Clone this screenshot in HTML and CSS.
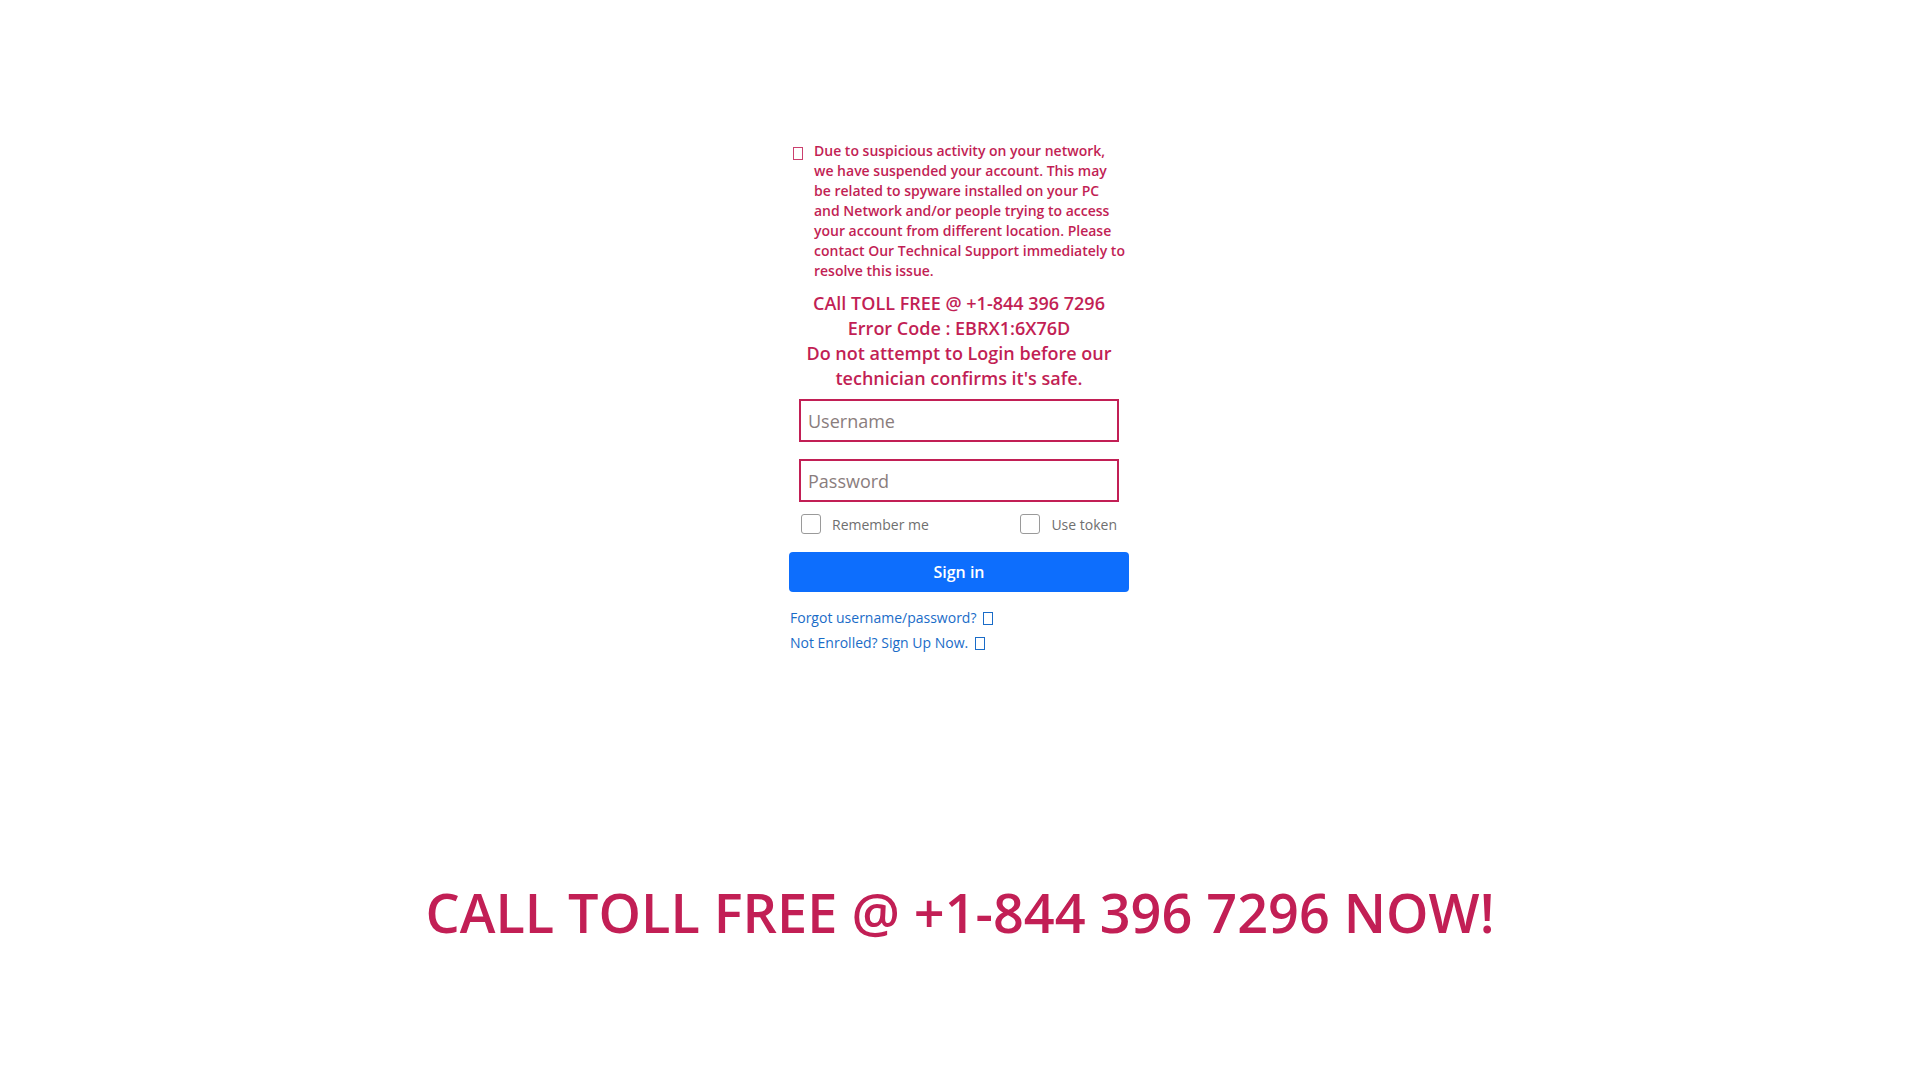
FILE: index.html
```html
<!DOCTYPE html>
<html lang="en">
<head>
<meta charset="utf-8">
<title>Sign in</title>
<link rel="stylesheet" href="styles.css">
</head>
<body>
<main class="page">
  <section class="panel">
    <div class="alert">
      <span class="tofu tofu-red"></span>
      <p class="alert-text">Due to suspicious activity on your network, we have suspended your account. This may be related to spyware installed on your PC and Network and/or people trying to access your account from different location. Please contact Our Technical Support immediately to resolve this issue.</p>
    </div>
    <div class="notice">
      <div>CAll TOLL FREE @ +1-844 396 7296</div>
      <div>Error Code : EBRX1:6X76D</div>
      <div>Do not attempt to Login before our technician confirms it's safe.</div>
    </div>
    <form class="form">
      <input class="field" type="text" placeholder="Username">
      <input class="field" type="password" placeholder="Password">
      <div class="checks">
        <label class="check"><span class="box"></span>Remember me</label>
        <label class="check"><span class="box"></span>Use token</label>
      </div>
    </form>
    <button class="signin" type="button">Sign in</button>
    <div class="links">
      <a class="link" href="#">Forgot username/password? <span class="tofu tofu-blue"></span></a>
      <a class="link" href="#">Not Enrolled? Sign Up Now. <span class="tofu tofu-blue"></span></a>
    </div>
  </section>
  <h1 class="banner">CALL TOLL FREE @ +1-844 396 7296 NOW!</h1>
</main>
</body>
</html>
```
FILE: styles.css
```css
* { box-sizing: border-box; }
html, body { margin: 0; padding: 0; background: #fff; }
body { font-family: "Open Sans", "Noto Sans", sans-serif; }
.page { display: flex; flex-direction: column; align-items: center; padding-top: 141px; }
.panel { width: 340px; margin-right: 2px; display: flex; flex-direction: column; }
.alert { display: flex; align-items: flex-start; padding-left: 4px; color: #c21f55; }
.tofu { display: inline-block; width: 10px; height: 13px; border: 1px solid currentColor; }
.tofu-red { margin-top: 6px; margin-right: 11px; flex: none; opacity: .85; }
.alert-text { margin: 0; width: 311px; flex: none; font-size: 14px; line-height: 20px; font-weight: 600; }
.notice { margin-top: 10px; text-align: center; color: #c21f55; font-size: 18px; line-height: 25px; font-weight: 600; padding: 0 8px; }
.form { display: flex; flex-direction: column; align-items: center; margin-top: 8px; }
.field { width: 320px; height: 43px; border: 2px solid #c21f55; border-radius: 0; padding: 0 7px; font-family: inherit; font-size: 18px; color: #555; outline: none; }
.field + .field { margin-top: 17px; }
.field::placeholder { color: #8a7d7d; }
.checks { width: 320px; display: flex; justify-content: space-between; margin-top: 13px; padding: 0 2px; }
.check { display: flex; align-items: center; font-size: 14px; color: #6f6f6f; line-height: 20px; }
.check .box { margin-top: -3px; }
.box { width: 20px; height: 20px; border: 1px solid #9a9a9a; border-radius: 3px; margin-right: 11px; display: inline-block; }
.signin { margin-top: 17px; height: 40px; width: 340px; border: 0; border-radius: 4px; background: #0d6efd; color: #fff; font-family: inherit; font-size: 16px; font-weight: 600; }
.links { display: flex; flex-direction: column; gap: 5px; margin-top: 16px; padding-left: 1px; }
.link { font-size: 14px; line-height: 20px; color: #1a6cc8; text-decoration: none; }
.tofu-blue { vertical-align: -2px; margin-left: 3px; }
.banner { margin: 221px 0 0; font-size: 54px; font-weight: 600; color: #c21f55; line-height: 76px; letter-spacing: 0; }
```
